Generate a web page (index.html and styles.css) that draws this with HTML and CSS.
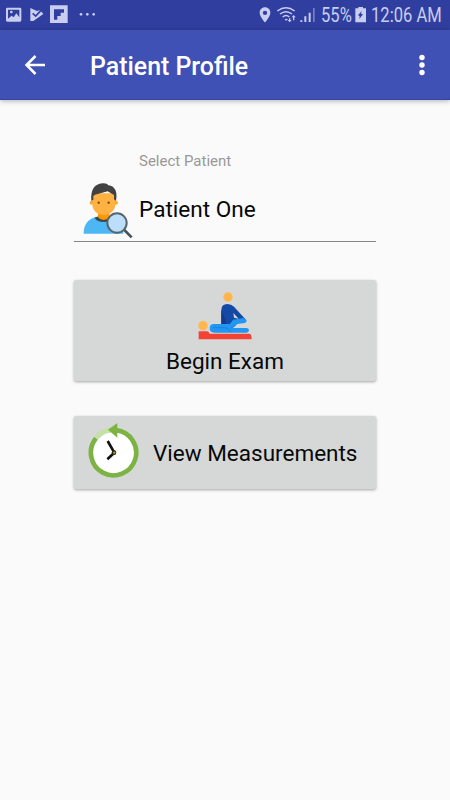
FILE: index.html
```
<!DOCTYPE html>
<html lang="en">
<head>
<meta charset="utf-8">
<title>Patient Profile</title>
<link rel="stylesheet" href="styles.css">
</head>
<body>
<div class="status">
  <svg class="notifications" width="100" height="30" viewBox="0 0 300 90">
    <path fill-rule="evenodd" d="M22 23h38q4 0 4 4v34q0 4-4 4H22q-4 0-4-4V27q0-4 4-4zM24 29v27l11-9 6 5 8-12 9 12V29z"/>
    <circle cx="34" cy="36" r="4"/>
    <path d="M91 24l20 9 9-2 10 11-30 21h-9z"/>
    <path class="check" d="M98 40l9 8 16-17"/>
    <path fill-rule="evenodd" d="M150 16h53v53h-53zM162 28v31h10V48h10V38h10V28z"/>
    <circle cx="243" cy="43" r="4"/><circle cx="262" cy="43" r="4"/><circle cx="281" cy="43" r="4"/>
  </svg>
  <svg class="signals" width="60" height="30" viewBox="99 0 180 90">
    <path fill-rule="evenodd" d="M120 22c-9 0-16 7-16 16 0 12 16 29 16 29s16-17 16-29c0-9-7-16-16-16zm0 10a6.500 6.500 0 1 1 0 13 6.500 6.500 0 0 1 0-13z"/>
    <path class="waves" d="M157 33q26-19 52 0M165 42q18-14 36 0M173 51q10-9 20 0M180 60q4-3 7 0"/>
    <path d="M192 55h4v5h4l-6 7-6-7h4zM206 45l6 7h-4v9h-4v-9h-4z"/>
    <path d="M226 61h6v5h-6zM238 49h6v17h-6zM251 38h6v28h-6z"/>
    <path opacity=".45" d="M264 24h5v42h-5z"/>
  </svg>
  <span class="percent"><span>55%</span></span>
  <svg class="battery" width="12" height="30" viewBox="392 0 36 90">
    <path fill-rule="evenodd" d="M402 21h14v4h9v42h-32V25h9zM412 33l-11 13 5 2-1 9 11-14-6-2z"/>
  </svg>
  <span class="time"><span>12:06 AM</span></span>
</div>
<header class="bar">
  <svg class="back" width="22" height="22" viewBox="0 0 22 22"><path d="M21 11H3M11.500 2l-9 9 9 9"/></svg>
  <h1>Patient Profile</h1>
  <svg class="more" width="6" height="22" viewBox="0 0 6 22"><circle cx="3" cy="3.500" r="2.700"/><circle cx="3" cy="11" r="2.700"/><circle cx="3" cy="18.500" r="2.700"/></svg>
</header>
<main>
  <label class="hint">Select Patient</label>
  <div class="field">
    <svg width="50" height="56" viewBox="54 114 150 168">
      <path fill="#4db6f5" d="M56 266c0-27 11-42 36-50h48c24 8 35 25 35 50z"/>
      <path fill="#344954" d="M89 218l11-4h32l11 4q-4 13-26 13-21 0-28-13z"/>
      <path fill="#ff9800" d="M99 195h34v22q-6 8-17 8t-17-8z"/>
      <circle fill="#ffa726" cx="80" cy="173" r="6"/><circle fill="#ffa726" cx="153" cy="173" r="6"/>
      <path fill="#ffb142" d="M82 145h69v33c0 17-14 32-35 32s-34-15-34-32z"/>
      <path fill="#424242" d="M79 168c-3-34 10-53 37-53 7 0 12 2 14 6 22 2 28 23 23 47l-6-5v-13l-19-11-38 10-5 4v11z"/>
      <circle fill="#784719" cx="101" cy="173" r="3.500"/><circle fill="#784719" cx="131" cy="173" r="3.500"/>
      <path d="M178 255l22 22" stroke="#47525a" stroke-width="8"/>
      <circle cx="156" cy="234" r="29" fill="#bbdefb" stroke="#596469" stroke-width="6"/>
    </svg>
    <span>Patient One</span>
  </div>
  <button class="btn exam">
    <svg width="54" height="48" viewBox="39 36 162 144">
      <circle fill="#ffb74d" cx="129" cy="51" r="14"/>
      <circle fill="#ffb74d" cx="54" cy="137" r="14"/>
      <path fill="#f44336" d="M41 154h25q5 0 8 7h119q7 0 7 17H41z"/>
      <path fill="#1549a6" d="M109 133V90q0-18 18-18 12 0 20 8l37 41-20 7h-14l-6 7z"/>
      <path fill="#0d3c91" d="M109 90l15 36v8h-15z"/>
      <path fill="#d6d8d7" d="M145 99l16 17-14-3z"/>
      <path fill="#2196f3" d="M87 132h48l9-13 31-5 9 6q2 7-5 9l-22 3-13 12h41q7 1 7 7t-7 7H88q-14 0-14-13t13-13z"/>
      <path d="M84 143h33q14 0 20 14M137 145l15-10" fill="none" stroke="#1976d2" stroke-width="2"/>
    </svg>
    <span>Begin Exam</span>
  </button>
  <button class="btn view">
    <svg width="52" height="57" viewBox="66 48 156 171">
      <circle fill="#fff" cx="143" cy="140" r="62"/>
      <path d="M91 95q20-24 50-24" fill="none" stroke="#c5e1a5" stroke-width="15"/>
      <path d="M150 72.500A68 68 0 1 1 90 97" fill="none" stroke="#7cb342" stroke-width="14"/>
      <path fill="#7cb342" d="M126 71l28-20v44z"/>
      <path d="M125 105l20 35-21 20" fill="none" stroke="#111" stroke-width="8"/>
      <circle cx="144" cy="140" r="7" fill="#292914"/><circle cx="145" cy="140" r="3.500" fill="#9e9d24"/>
    </svg>
    <span>View Measurements</span>
  </button>
</main>
</body>
</html>
```
FILE: styles.css
```
* { box-sizing: border-box; }
body { margin: 0; height: 800px; background: #fafafa; color: #080808; font-family: Roboto, "Liberation Sans", sans-serif; overflow: hidden; }
svg { display: block; flex: none; }
.status { display: flex; height: 30px; background: #303f9f; color: #c9cef0; fill: #c9cef0; }
.signals { margin-left: 158px; }
.check { fill: none; stroke: #303f9f; stroke-width: 5; }
.waves { fill: none; stroke: #c9cef0; stroke-width: 4.500; }
.percent, .time { font-size: 19.500px; line-height: 31px; white-space: nowrap; }
.percent { width: 31px; margin-left: 3px; }
.percent span, .time span { display: inline-block; transform: scaleX(.85); transform-origin: left; }
.battery { margin-left: 3px; }
.time { width: 76px; margin-left: 4px; }
.bar { display: flex; align-items: center; height: 70px; padding: 0 25px 0 24px; background: #3f51b5; color: #fff; border-bottom: 1px solid #3445a3; box-shadow: 0 1px 5px rgba(0,0,0,.3); }
.back { fill: none; stroke: #fff; stroke-width: 2.500; }
h1 { margin: 4px auto 0 44px; font-size: 24.900px; line-height: 30px; font-weight: 500; white-space: nowrap; }
.more { fill: #fff; }
main { width: 302px; margin-left: 74px; padding-top: 51px; }
.hint { display: block; padding-left: 65px; font-size: 15px; line-height: 20px; color: #989898; }
.field { display: flex; height: 71px; padding: 12px 0 0 9px; border-bottom: 1px solid #858585; }
.field span { margin-left: 6px; font-size: 22.600px; line-height: 54px; white-space: nowrap; }
.btn { display: flex; align-items: center; width: 302px; padding: 0; border: 0; border-radius: 2px; background: #d6d8d7; color: #080808; font: 22.500px Roboto, sans-serif; box-shadow: 0 1px 3px rgba(0,0,0,.35); white-space: nowrap; }
.exam { flex-direction: column; height: 101px; margin-top: 38px; padding-top: 12px; }
.exam span { margin-top: 8px; line-height: 27px; }
.view { height: 73px; margin-top: 35px; padding-left: 14px; }
.view svg { margin-top: -5px; }
.view span { margin: 0 0 0 13px; }
```
